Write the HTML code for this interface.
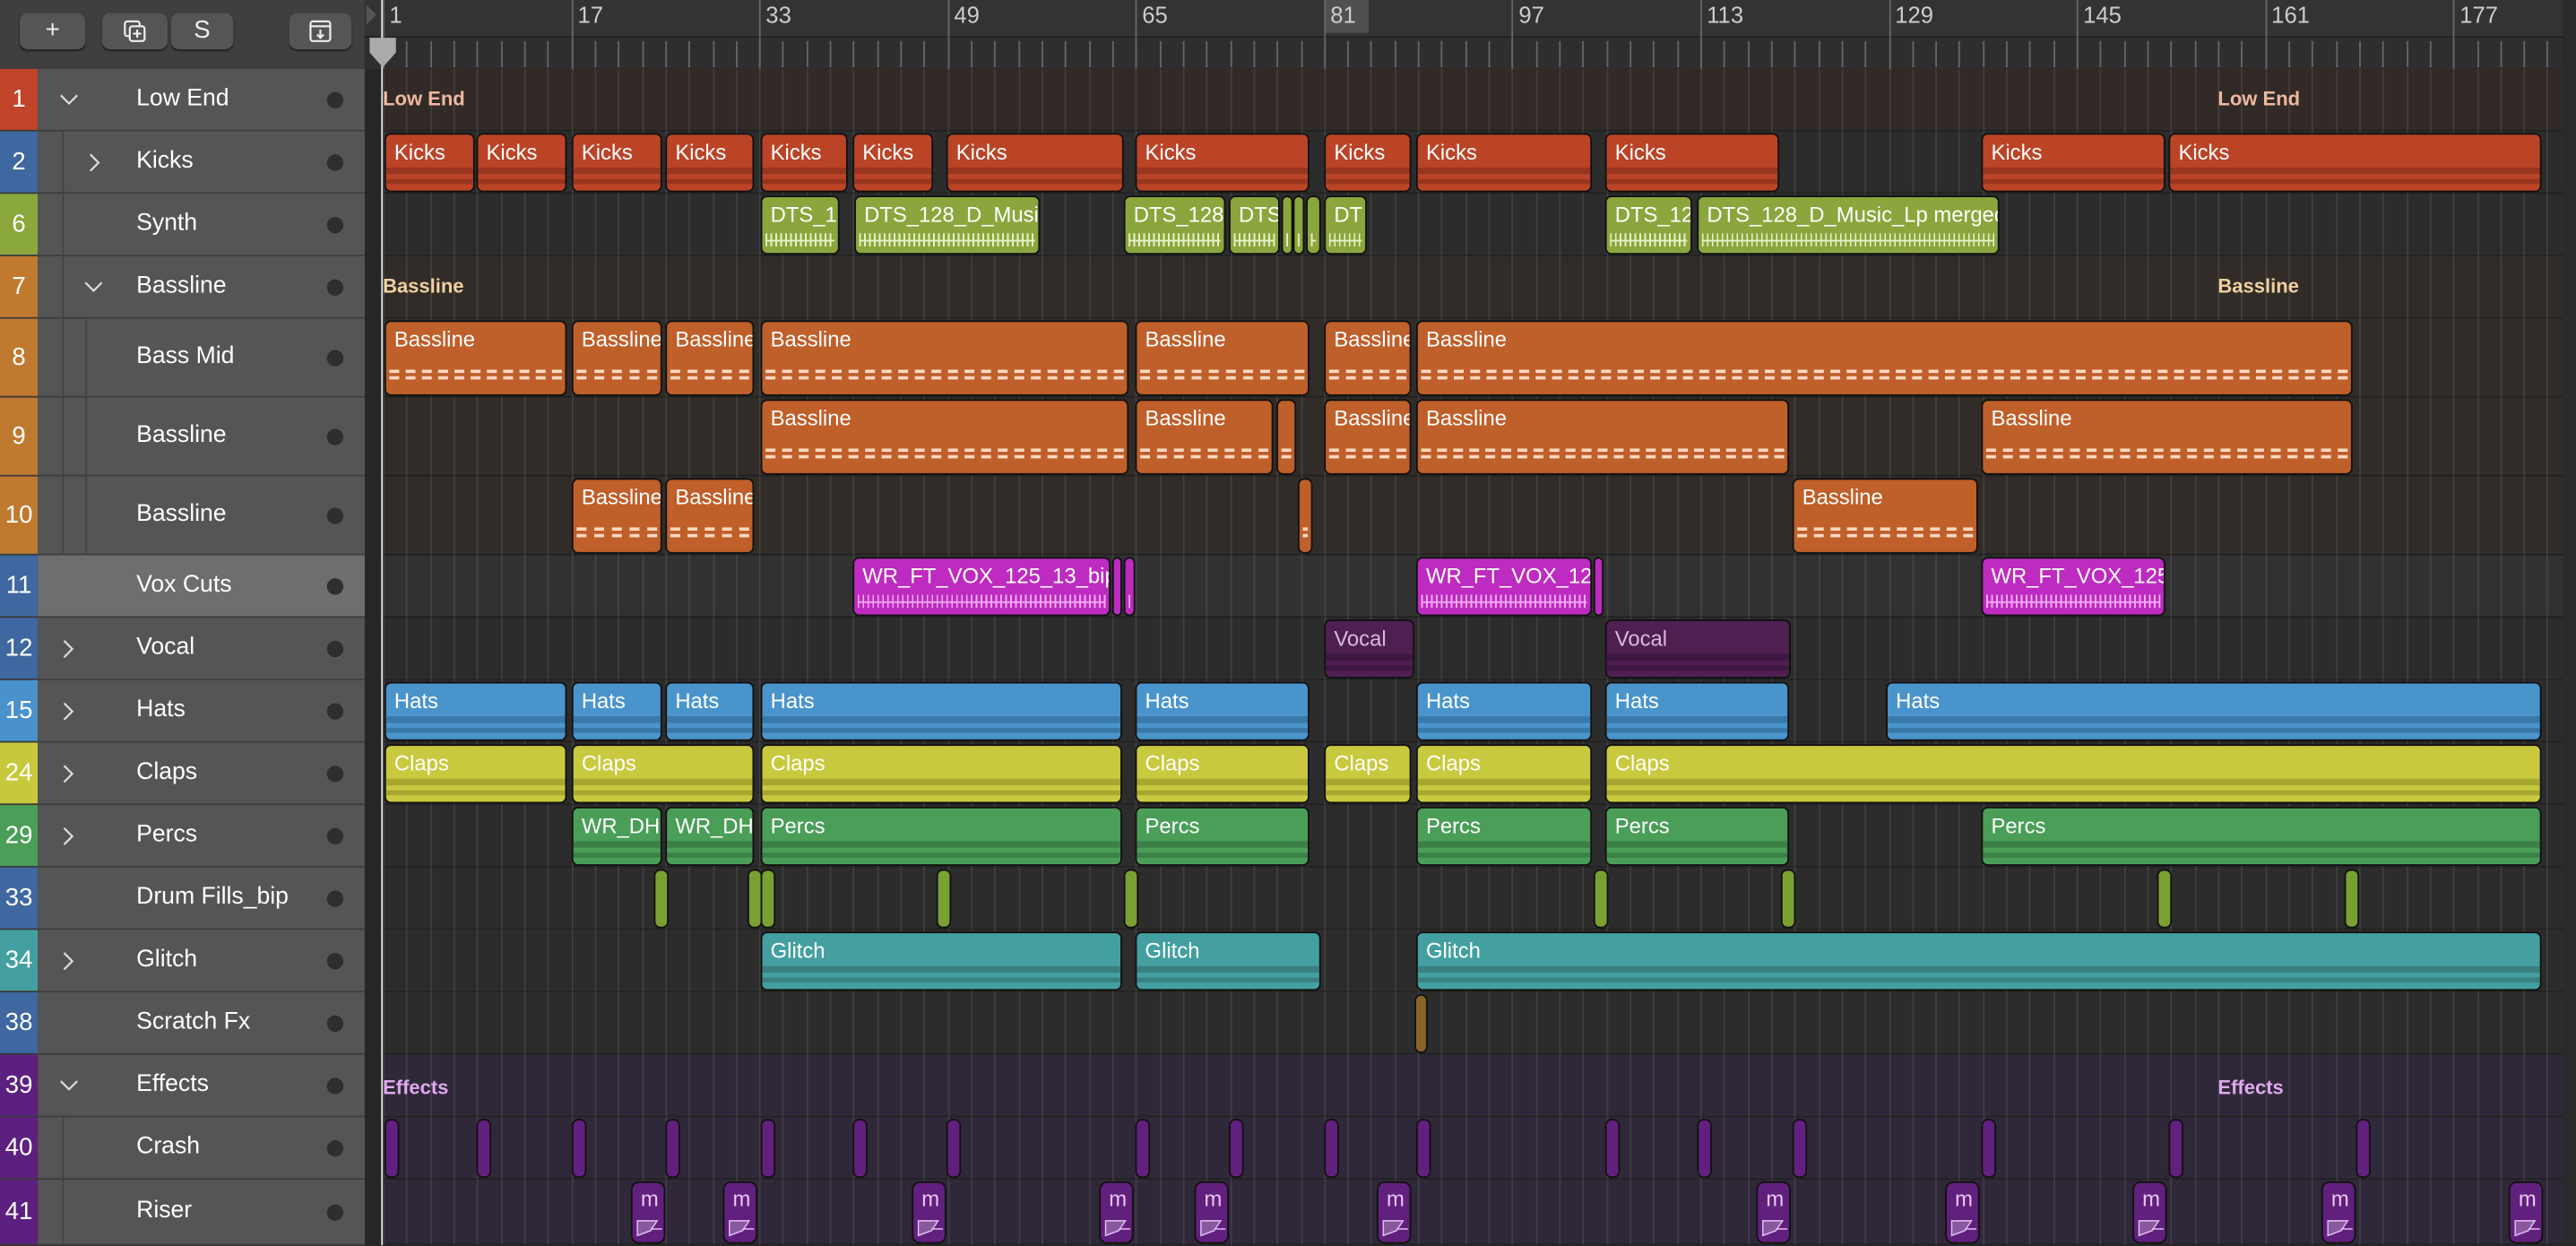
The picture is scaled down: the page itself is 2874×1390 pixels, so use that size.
<!DOCTYPE html>
<html><head><meta charset="utf-8">
<style>
html,body{margin:0;padding:0;background:#2a2a2a;overflow:hidden;width:2874px;height:1390px}
#w{position:absolute;left:0;top:0;width:1568px;height:758px;transform:scale(1.83291);transform-origin:0 0;background:#2b2b2b;font-family:"Liberation Sans",sans-serif;overflow:hidden}
.a{position:absolute}
.num{position:absolute;left:0;width:23px;color:#fff;font-size:15px;text-align:center;border-bottom:1px solid #3a3a3a;box-sizing:border-box}
.nm{position:absolute;left:83px;color:#fff;font-size:14.5px}
.dot{position:absolute;left:199px;width:10px;height:10px;border-radius:50%;background:#2e2e2e}
.rg{position:absolute;border:1.5px solid #111;border-radius:4px;box-sizing:border-box;overflow:hidden;color:#fff;font-size:13px;white-space:nowrap}
.rg span{position:absolute;left:5px;top:3px}
.btn{position:absolute;top:8px;height:22px;background:#555;border-radius:5px;color:#eee;text-align:center;line-height:22px;font-size:15px;box-shadow:0 1px 1px #222}
</style></head><body><div id="w">
<div class="a" style="left:0;top:0;width:222px;height:42px;background:#3f3f3f;border-bottom:1px solid #333"></div>
<div class="btn" style="left:12px;width:40px">+</div>
<div class="btn" style="left:62px;width:40px"><svg width="16" height="16" viewBox="0 0 16 16" style="margin-top:3px"><rect x="2" y="2" width="9" height="9" rx="1.5" fill="none" stroke="#eee" stroke-width="1.2"/><rect x="5" y="5" width="9" height="9" rx="1.5" fill="#555" stroke="#eee" stroke-width="1.2"/><path d="M9.5 7v5M7 9.5h5" stroke="#eee" stroke-width="1.2"/></svg></div>
<div class="btn" style="left:104px;width:38px">S</div>
<div class="btn" style="left:176px;width:38px"><svg width="16" height="16" viewBox="0 0 16 16" style="margin-top:3px"><rect x="2" y="2" width="12" height="12" rx="1.5" fill="none" stroke="#eee" stroke-width="1.2"/><path d="M2 5h12M8 7v5M6 10l2 2 2-2" stroke="#eee" stroke-width="1.2" fill="none"/></svg></div>
<div class="a" style="left:222px;top:0;width:1346px;height:22px;background:#333"></div>
<div class="a" style="left:222px;top:22px;width:1346px;height:20px;background:#2e2e2e;border-top:1px solid #222;border-bottom:2px solid #262626"></div>
<div class="a" style="left:806px;top:0;width:27px;height:20px;background:#505050"></div>
<div class="a" style="left:222px;top:42px;width:11px;height:716px;background:#262626"></div>
<div class="a" style="left:232px;top:0;width:1px;height:758px;background:#ddd;z-index:5"></div>
<svg class="a" style="left:224px;top:22px;z-index:6" width="18" height="20"><path d="M1 1h16v9l-8 9-8-9z" fill="#aaa"/></svg>
<svg class="a" style="left:222px;top:2px" width="10" height="14"><path d="M1 1l6 6-6 6z" fill="#555"/></svg>
</div>
<script>
var W=document.getElementById('w');
function el(html){W.insertAdjacentHTML('beforeend',html);}
var bx=function(b){return 233+(b-1)*7.16;};
for(var b=1;b<=185;b+=2){var x=bx(b);
 el('<div class="a" style="left:'+x.toFixed(1)+'px;top:25px;width:1px;height:16px;background:#666"></div>');}
[1,17,33,49,65,81,97,113,129,145,161,177].forEach(function(b){var x=bx(b);
 el('<div class="a" style="left:'+x.toFixed(1)+'px;top:0;width:1px;height:42px;background:#666"></div>');
 el('<div class="a" style="left:'+(x+4).toFixed(1)+'px;top:1px;color:#ccc;font-size:14px">'+b+'</div>');});
var rows=[
[42,80,'1','#c0432a','Low End',0,'v','#312a27'],
[80,118,'2','#3f67a0','Kicks',1,'>','#2c2c2c'],
[118,156,'6','#8aa83c','Synth',1,'','#2c2c2c'],
[156,194,'7','#c07a30','Bassline',1,'v','#312c27'],
[194,242,'8','#c07a30','Bass Mid',2,'','#312c27'],
[242,290,'9','#c07a30','Bassline',2,'','#312c27'],
[290,338,'10','#c07a30','Bassline',2,'','#312c27'],
[338,376,'11','#3f67a0','Vox Cuts',0,'','#313131'],
[376,414,'12','#3f67a0','Vocal',0,'>','#2c2c2c'],
[414,452,'15','#4a92cc','Hats',0,'>','#2c2c2c'],
[452,490,'24','#c8c83c','Claps',0,'>','#2c2c2c'],
[490,528,'29','#4a9e58','Percs',0,'>','#2c2c2c'],
[528,566,'33','#3f67a0','Drum Fills_bip',0,'','#2c2c2c'],
[566,604,'34','#44a0a0','Glitch',0,'>','#2c2c2c'],
[604,642,'38','#3f67a0','Scratch Fx',0,'','#2c2c2c'],
[642,680,'39','#5c2080','Effects',0,'v','#2f2838'],
[680,718,'40','#5c2080','Crash',1,'','#2f2838'],
[718,758,'41','#5c2080','Riser',1,'','#2f2838']];
rows.forEach(function(r){var t=r[0],h=r[1]-r[0],c=(t+h/2);
 el('<div class="num" style="top:'+t+'px;height:'+h+'px;line-height:'+h+'px;background:'+r[3]+'">'+r[2]+'</div>');
 var bg=r[2]=='11'?'#6e6e6e':'#555';
 el('<div class="a" style="left:23px;top:'+t+'px;width:199px;height:'+h+'px;background:#555;border-bottom:1.5px solid #3e3e3e;box-sizing:border-box"></div>');
 var ind=r[5]==1?38:(r[5]==2?52:23);
 if(r[5]>0) el('<div class="a" style="left:'+ind+'px;top:'+t+'px;width:'+(222-ind)+'px;height:'+h+'px;border-left:1.5px solid #444;border-bottom:1.5px solid #3e3e3e;box-sizing:border-box;background:'+bg+'"></div>');
 if(r[2]=='11') el('<div class="a" style="left:23px;top:'+t+'px;width:199px;height:'+(h-1)+'px;background:#6e6e6e"></div>');
 if(r[5]==2) el('<div class="a" style="left:38px;top:'+t+'px;width:14px;height:'+h+'px;border-left:1.5px solid #444;box-sizing:border-box"></div>');
 if(r[6]){var cx=r[5]==0?36:(r[2]=='7'?51:52);
  var p=r[6]=='v'?'M1 3l5 5 5-5':'M3 1l5 5-5 5';
  el('<svg class="a" style="left:'+cx+'px;top:'+(c-6)+'px" width="12" height="12"><path d="'+p+'" stroke="#ddd" stroke-width="1.2" fill="none"/></svg>');}
 el('<div class="nm" style="top:'+(c-9)+'px">'+r[4]+'</div>');
 el('<div class="dot" style="top:'+(c-5)+'px"></div>');
 el('<div class="a" style="left:233px;top:'+t+'px;width:1335px;height:'+h+'px;background:'+r[7]+';border-bottom:1px solid #222;box-sizing:border-box"></div>');
});
for(var b=1;b<=185;b+=2){var x=bx(b);
 el('<div class="a" style="left:'+x.toFixed(1)+'px;top:42px;width:1px;height:716px;background:rgba(255,255,255,0.09)"></div>');}
el('<div class="a" style="left:1560px;top:0;width:8px;height:758px;background:#2a2a2a"></div>');
function lab(x,y,t,c){el('<div class="a" style="left:'+x+'px;top:'+y+'px;color:'+c+';font-size:12px;font-weight:bold">'+t+'</div>');}
lab(233,53,'Low End','#f0b8a0');lab(1350,53,'Low End','#f0b8a0');
lab(233,167,'Bassline','#f0d0a0');lab(1350,167,'Bassline','#f0d0a0');
lab(233,655,'Effects','#e0a8f0');lab(1350,655,'Effects','#e0a8f0');
function R(x1,x2,y1,y2,col,txt,dk,kind){
 var s='<div class="rg" style="left:'+x1+'px;top:'+y1+'px;width:'+(x2-x1)+'px;height:'+(y2-y1)+'px;background:'+col+'">';
 var h=y2-y1;
 if(kind=='lines'){s+='<div class="a" style="left:0;right:0;top:'+(h*0.55)+'px;height:4px;background:'+dk+'"></div><div class="a" style="left:0;right:0;top:'+(h*0.75)+'px;height:3px;background:'+dk+'"></div>';}
 if(kind=='dash'){s+='<div class="a" style="left:2px;right:2px;top:'+(h*0.62)+'px;height:2px;border-top:2px dashed '+dk+'"></div><div class="a" style="left:2px;right:2px;top:'+(h*0.72)+'px;height:2px;border-top:2px dashed '+dk+'"></div>';}
 if(kind=='wave'){s+='<div class="a" style="left:2px;right:2px;top:'+(h*0.62)+'px;height:8px;background:repeating-linear-gradient(90deg,'+dk+' 0 1px,transparent 1px 3px)"></div><div class="a" style="left:2px;right:2px;top:'+(h*0.62+4)+'px;height:1px;background:'+dk+'"></div>';}
 if(txt)s+='<span>'+txt+'</span>';
 s+='</div>';el(s);}
var K='#bb4427',KD='#983620';
[[234,289],[290,345],[348,403],[405,459],[463,516],[519,568],[576,684],[691,797],[806,859],[862,969],[977,1083],[1206,1318],[1320,1547]].forEach(function(a){R(a[0],a[1],81,117,K,'Kicks',KD,'lines');});
var G='#8aa63c',GD='#e8f0c8';
[[463,511,'DTS_12'],[520,633,'DTS_128_D_Music'],[684,746,'DTS_128_'],[748,779,'DTS'],[780,787,''],[787,794,''],[795,804,''],[806,832,'DT'],[977,1030,'DTS_12'],[1033,1217,'DTS_128_D_Music_Lp merged']].forEach(function(a){R(a[0],a[1],119,155,G,a[2],GD,'wave');});
var B='#bf5f2a',BD='#fad8c0';
[[234,345],[348,403],[405,459],[463,687],[691,797],[806,859],[862,1432]].forEach(function(a){R(a[0],a[1],195,241,B,'Bassline',BD,'dash');});
[[463,687,'Bassline'],[691,775,'Bassline'],[777,789,''],[806,859,'Bassline'],[862,1089,'Bassline'],[1206,1432,'Bassline']].forEach(function(a){R(a[0],a[1],243,289,B,a[2],BD,'dash');});
[[348,403,'Bassline'],[405,459,'Bassline'],[790,799,''],[1091,1204,'Bassline']].forEach(function(a){R(a[0],a[1],291,337,B,a[2],BD,'dash');});
var M='#bd2bc0',MD='#f0a8f0';
[[519,676,'WR_FT_VOX_125_13_bip.'],[677,683,''],[684,691,''],[862,969,'WR_FT_VOX_12'],[970,976,''],[1206,1318,'WR_FT_VOX_125_']].forEach(function(a){R(a[0],a[1],339,375,M,a[2],MD,'wave');});
[[806,861],[977,1090]].forEach(function(a){R(a[0],a[1],377,413,'#4e1f50','<span style="color:#d8b8e0;position:static">Vocal</span>','#3c1840','lines');});
var H='#4a94cc',HD='#3a78a8';
[[234,345],[348,403],[405,459],[463,683],[691,797],[862,969],[977,1089],[1148,1547]].forEach(function(a){R(a[0],a[1],415,451,H,'Hats',HD,'lines');});
var C='#c9c940',CD='#a8a830';
[[234,345],[348,459],[463,683],[691,797],[806,859],[862,969],[977,1547]].forEach(function(a){R(a[0],a[1],453,489,C,'Claps',CD,'lines');});
var P='#4a9e58',PD='#3c8048';
[[348,403,'WR_DH'],[405,459,'WR_DH'],[463,683,'Percs'],[691,797,'Percs'],[862,969,'Percs'],[977,1089,'Percs'],[1206,1547,'Percs']].forEach(function(a){R(a[0],a[1],491,527,P,a[2],PD,'lines');});
[398,455,463,570,684,970,1084,1313,1427].forEach(function(x){R(x,x+9,529,565,'#7aa032','', '','');});
var T='#44a0a0',TD='#3a8080';
[[463,683],[691,804],[862,1547]].forEach(function(a){R(a[0],a[1],567,603,T,'Glitch',TD,'lines');});
R(861,869,605,641,'#8a6228','','','');
[234,290,348,405,463,519,576,691,748,806,862,977,1033,1091,1206,1320,1434].forEach(function(x){R(x,x+9,681,717,'#62207e','','','');});
[384,440,555,669,727,838,1069,1184,1298,1413,1527].forEach(function(x){
 el('<div class="rg" style="left:'+x+'px;top:719px;width:21px;height:38px;background:#62207e;border-radius:5px"><span style="left:5px;top:2px;color:#e8c8f0">m</span><svg class="a" style="left:2px;top:21px" width="17" height="12"><path d="M1 2h12l-4 6-8 3z" fill="rgba(255,255,255,0.25)" stroke="#e0c0f0" stroke-width="0.8"/><path d="M9 7h7" stroke="#e0c0f0" stroke-width="0.8"/></svg></div>');});
</script>
</body></html>
